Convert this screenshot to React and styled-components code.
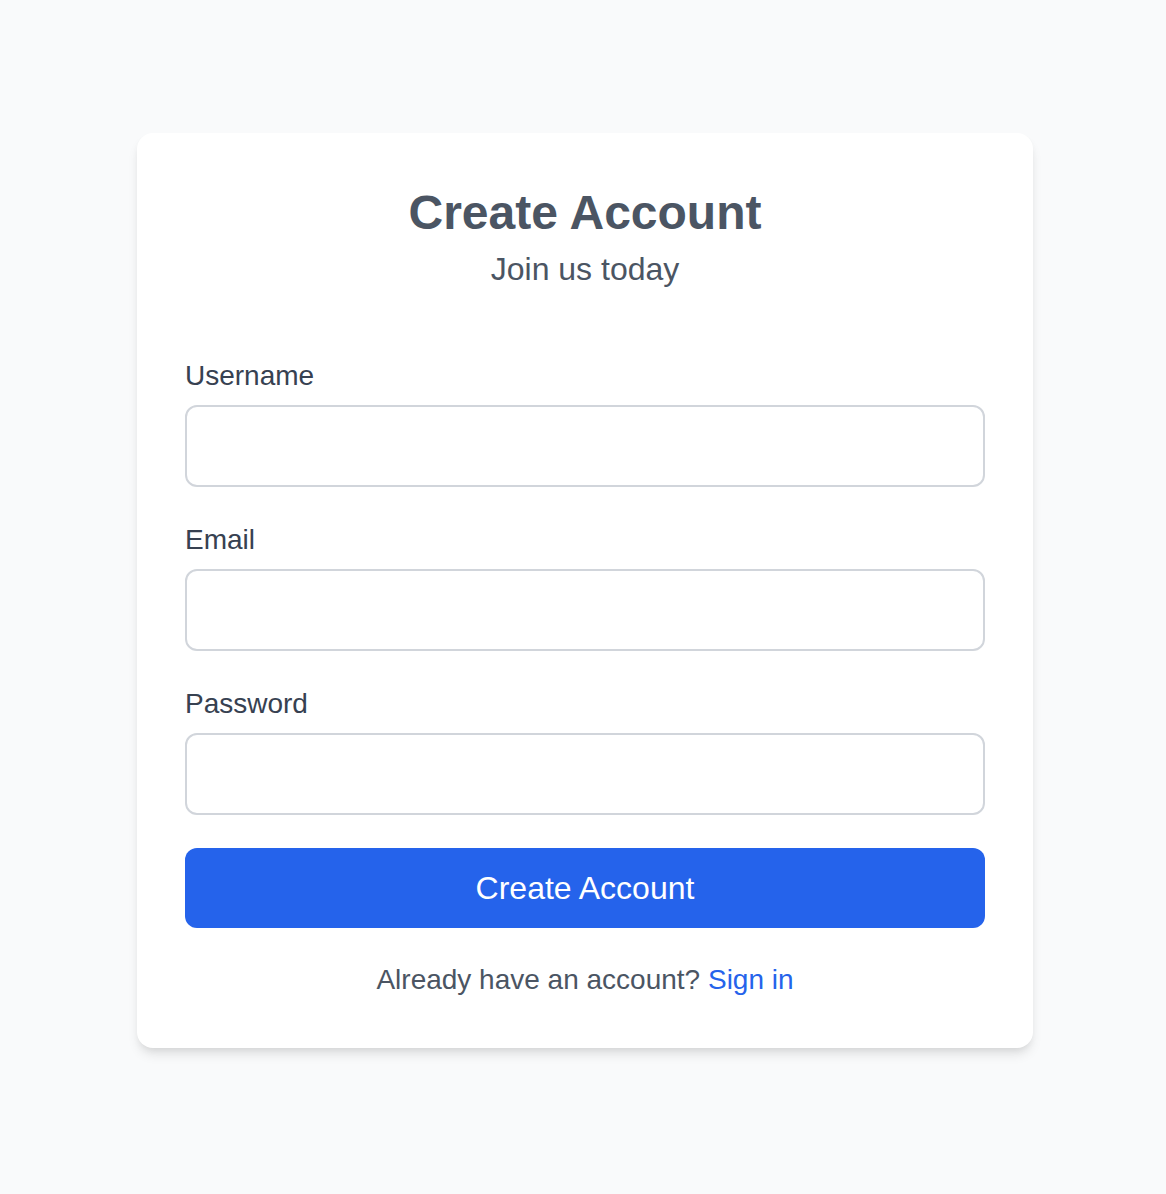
import React from 'react';
import styled, { createGlobalStyle } from 'styled-components';

const GlobalStyle = createGlobalStyle`
  html, body {
    margin: 0;
    padding: 0;
    background-color: #f9fafb;
    font-family: "Liberation Sans", Arial, Helvetica, sans-serif;
  }
  * {
    box-sizing: border-box;
  }
`;

const Page = styled.div`
  min-height: 1194px;
  display: flex;
  justify-content: center;
  align-items: flex-start;
  padding: 133px 0 0 4px;
`;

const Card = styled.form`
  width: 896px;
  background-color: #ffffff;
  border-radius: 16px;
  padding: 48px;
  box-shadow: 0 8px 12px -2px rgba(0, 0, 0, 0.1), 0 4px 8px -4px rgba(0, 0, 0, 0.1);
  display: flex;
  flex-direction: column;
`;

const Header = styled.div`
  text-align: center;
  margin-bottom: 62px;
`;

const Title = styled.h1`
  margin: 0;
  font-size: 48px;
  line-height: 64px;
  font-weight: 700;
  color: #4b5563;
`;

const Subtitle = styled.p`
  margin: 0;
  font-size: 32px;
  line-height: 48px;
  color: #4b5563;
`;

const Fields = styled.div`
  display: flex;
  flex-direction: column;
  gap: 32px;
`;

const Field = styled.div`
  display: flex;
  flex-direction: column;
`;

const Label = styled.label`
  font-size: 28px;
  line-height: 42px;
  color: #374151;
  margin-bottom: 8px;
`;

const Input = styled.input`
  height: 82px;
  width: 100%;
  border: 2px solid #d1d5db;
  border-radius: 12px;
  padding: 0 24px;
  font-size: 28px;
  font-family: inherit;
  color: #111827;
  background: #ffffff;
  outline: none;
`;

const SubmitButton = styled.button`
  margin-top: 33px;
  height: 80px;
  width: 100%;
  border: none;
  border-radius: 12px;
  background-color: #2563eb;
  color: #ffffff;
  font-size: 32px;
  font-family: inherit;
  cursor: pointer;
`;

const Footer = styled.p`
  margin: 32px 0 0;
  text-align: center;
  font-size: 28px;
  line-height: 40px;
  color: #4b5563;
`;

const SignInLink = styled.a`
  color: #2563eb;
  text-decoration: none;
`;

const fields = [
  { id: 'username', label: 'Username', type: 'text' },
  { id: 'email', label: 'Email', type: 'email' },
  { id: 'password', label: 'Password', type: 'password' },
];

const App = () => (
  <>
    <GlobalStyle />
    <Page>
      <Card onSubmit={(e) => e.preventDefault()}>
        <Header>
          <Title>Create Account</Title>
          <Subtitle>Join us today</Subtitle>
        </Header>

        <Fields>
          {fields.map((f) => (
            <Field key={f.id}>
              <Label htmlFor={f.id}>{f.label}</Label>
              <Input id={f.id} type={f.type} />
            </Field>
          ))}
        </Fields>

        <SubmitButton type="submit">Create Account</SubmitButton>

        <Footer>
          Already have an account? <SignInLink href="#">Sign in</SignInLink>
        </Footer>
      </Card>
    </Page>
  </>
);

export default App;
